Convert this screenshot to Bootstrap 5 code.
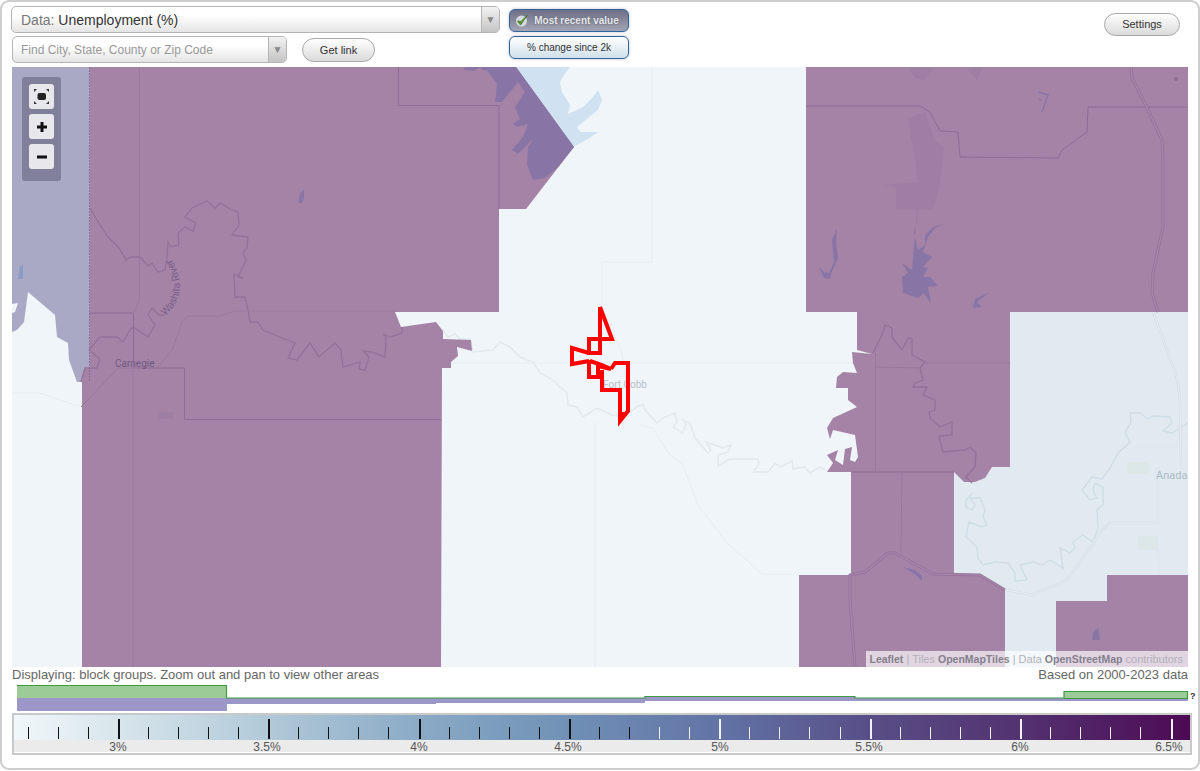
<!DOCTYPE html>
<html lang="en">
<head>
<meta charset="utf-8">
<title>Unemployment map</title>
<link rel="stylesheet" href="https://cdn.jsdelivr.net/npm/bootstrap@5.3.0/dist/css/bootstrap.min.css">
<style>
html,body{margin:0;height:771px;overflow:hidden;background:#fff}
body{font-family:"Liberation Sans",Arial,sans-serif;color:#555}
.app-frame{width:1200px;height:770px;border:2px solid #cdcdcd;border-radius:9px;background:#fff}
.top-area{height:65px}
.pick-col{margin:4px 0 0 9px;width:489px}
.fake-select{height:27px;border:1px solid #b4b4b4;border-radius:5px;background:linear-gradient(#fff 35%,#e4e4e4);overflow:hidden}
.select-main{width:489px;font-size:14px;padding-left:9px;color:#777}
.select-main b{font-weight:400;color:#333}
.select-label{padding-top:1px}
.select-find{width:275px;font-size:12px;padding-left:8px;color:#999;margin-left:1px}
.find-row{margin-top:3px}
.select-arrow{width:18px;height:100%;border-left:1px solid #b4b4b4;background:linear-gradient(#f2f2f2,#c4c4c4);color:#888;font-size:10px}
.pill-btn{font-size:11px;line-height:1;color:#333;padding:0;border:1px solid #a9a9a9;background:linear-gradient(#fff,#dadada);box-shadow:none}
.get-btn{width:73px;height:24px;margin:2px 0 0 15px}
.set-btn{width:76px;height:23px;margin:11px 18px 0 0}
.toggle-col{width:120px;margin:7px 0 0 9px}
.toggle-btn{height:23px;width:120px;padding:0;border:1px solid #2f649f;border-radius:6px;font-size:10px;line-height:1;box-shadow:0 0 3px #bbb}
.toggle-on{background:linear-gradient(#6c6f87,#a3a5b5);color:#e4e8ef;font-weight:700;text-shadow:0 0 2px #555;padding-right:4px}
.toggle-off{background:linear-gradient(#fff,#cfe0ea);color:#333;margin-top:4px}
.map-box{width:1176px;height:600px;margin-left:10px;overflow:hidden;background:#f0f5f9}
.map-box svg{display:block}
.map-tools{left:10px;top:10px;width:39px;height:104px;padding:7px;background:#81809a;border-radius:3px;gap:5px}
.map-tool{width:25px;height:25px;background:#e8e7ec;border-radius:3px}
.map-credit{right:0;bottom:0;height:16px;padding:0 5px 0 4px;font-size:11px;line-height:16px;background:rgba(255,255,255,.66);color:#b4b0ba;white-space:nowrap}
.map-credit b{color:#85808c;font-weight:700;font-size:10.5px}
.info-line{width:1176px;height:18px;margin-left:10px;font-size:13px;line-height:15px;color:#666}
.hist-box{display:block;margin-left:15px}
.scale-box{width:1180px;height:42px;margin-left:10px;border:2px solid #c9c9c9;background:#fff}
.scale-box svg{display:block}
</style>
</head>
<body>
<div class="app-frame">
  <div class="top-area d-flex align-items-start">
    <div class="pick-col">
      <div class="fake-select select-main d-flex align-items-center justify-content-between">
        <span class="select-label">Data: <b>Unemployment (%)</b></span>
        <span class="select-arrow d-flex align-items-center justify-content-center">▼</span>
      </div>
      <div class="find-row d-flex align-items-start">
        <div class="fake-select select-find d-flex align-items-center justify-content-between flex-shrink-0">
          <span>Find City, State, County or Zip Code</span>
          <span class="select-arrow d-flex align-items-center justify-content-center">▼</span>
        </div>
        <button type="button" class="btn rounded-pill pill-btn get-btn">Get link</button>
      </div>
    </div>
    <div class="toggle-col d-flex flex-column">
      <button type="button" class="btn toggle-btn toggle-on d-flex align-items-center justify-content-center gap-1">
        <svg width="15" height="15" viewBox="0 0 15 15"><circle cx="6.500" cy="8" r="5.500" fill="#d5d8dc"/><path d="M2.500 8l3 4 7-10-6.500 6.500z" fill="#58942f" stroke="#3e7a1e" stroke-width=".8"/></svg>
        <span>Most recent value</span>
      </button>
      <button type="button" class="btn toggle-btn toggle-off">% change since 2k</button>
    </div>
    <button type="button" class="btn rounded-pill pill-btn set-btn ms-auto">Settings</button>
  </div>

  <div class="map-box position-relative">
    <svg width="1176" height="600" viewBox="12 67 1176 600" xmlns="http://www.w3.org/2000/svg">
      <defs><path id="riverCurve" d="M165 316Q191 293 172 260"/></defs>
      <!-- light lake -->
      <path d="M515 67H570L565 74L560 82L562 92L570 105L568 114L583 107L593 97L598 90L602 100L598 110L577 127L580 132L598 132L588 139L573 147Z" fill="#d0e2f2"/>
      <!-- faint roads on pale ground -->
      <g fill="none" stroke="#e6edf2" stroke-width="1">
        <path d="M652 67V262H602V307L622 353L630 410"/>
        <path d="M443 363H1033"/>
        <path d="M12 393H40L75 405H82"/>
        <path d="M595 422V667"/>
        <path d="M640 425L653 428L668 453L683 465L698 505L727 543L762 574H799"/>
      </g>
      <!-- river on pale ground -->
      <path d="M443 330L448 337L455 334L460 339L470 339L473 352L493 350L500 342L510 347L520 357L533 362L540 373L553 380L560 387L567 393L568 405L577 407L583 417L597 408L612 415L623 417L637 407L643 404L645 410L657 423L663 418L675 413L677 422L673 427L682 433L686 425L683 420L690 423L695 438L708 453L711 450L706 442L723 448L731 445L728 452L718 455L718 466L730 459H758L759 463L754 472H768L775 463L780 467L792 461L793 469L805 467L810 473L820 467L825 470" fill="none" stroke="#e1e9ed" stroke-width="1.500"/>
      <!-- pale right area -->
      <path d="M1010 312H1188V575H1107V601H1056V667H1005V590L980 575L954 574V472L964 482L975 482L985 478L992 467H1010Z" fill="#e1eaf1"/>
      <g fill="#dce7e8"><path d="M1127 462h22v12h-22z"/><path d="M1138 536h20v14h-20z"/></g>
      <path d="M1133 447H1188M1150 490V493H1172M1158 540L1161 630" fill="none" stroke="#dfe8ea" stroke-width="1"/>
      <path d="M973 493L966 500L966 507L972 510L975 505L970 498L980 498L985 510L983 517L987 525L982 527L969 522L966 537L977 547L978 558L983 565L995 562L1008 563L1015 573L1015 581L1027 580L1020 565L1033 562L1042 565L1050 560L1063 568L1060 548L1070 553L1075 548L1073 542L1083 535L1093 542L1098 528L1097 510L1103 505L1103 487L1095 483L1093 490L1097 498L1090 500L1082 490L1092 477L1102 479L1110 468L1118 453L1130 442L1125 433L1131 422L1130 413L1140 413L1148 419L1153 416L1170 417L1172 423L1163 431L1172 433L1188 423" fill="none" stroke="#cfdde6" stroke-width="1.400"/>
      <path d="M1158 467V523H1110L1102 530L1083 558L1067 580L1032 595L1007 590" fill="none" stroke="#d4e0e6" stroke-width="2.600"/>
      <path d="M1158 467V523H1110L1102 530L1083 558L1067 580L1032 595L1007 590" fill="none" stroke="#e8eff3" stroke-width="1"/>
      <path d="M1153 312L1177 378L1180 400L1181 467" fill="none" stroke="#d4e0e6" stroke-width="2.600"/>
      <path d="M1153 312L1177 378L1180 400L1181 467" fill="none" stroke="#e8eff3" stroke-width="1"/>
      <!-- lavender area -->
      <path d="M12 67H90V367L83 370L82 382L77 382L69 360L68 343L57 337L55 315L28 292L24 322L17 330L12 332V313L15 312L18 303L12 304Z" fill="#a9a9c5"/>
      <path d="M20 266L23 265V279H18Z" fill="#8a9bc4"/>
      <!-- purple blocks -->
      <g fill="#a583a7">
        <path d="M90 67H516L574 147L526 209H499V312H395L401 327L436 322L443 331V339L471 340L472 351L457 347L458 356L451 362V368H442L441 667H82V382L83 370L90 367Z"/>
        <path d="M806 67H1188V312H1010V467H992L985 478L975 482L964 482L954 472V574L980 575L1005 590V667H799V575H851V472H827L833 463L827 455L838 450L835 460L843 465L845 449L852 447L850 460L855 462L858 457L855 435L833 430L830 439L827 428L833 418L857 407L848 400V388H836L837 377L843 372L857 373L853 363L852 352L872 354L857 350V312H806Z"/>
        <path d="M1056 667V601H1107V575H1188V667Z"/>
      </g>
      <!-- faint shapes on purple -->
      <g fill="#9e7ea3">
        <path d="M908 118L925 112L935 140L944 148L940 185L933 210H896V187L883 185L918 182L915 160Z"/>
        <path d="M908 68H934L925 80L915 78Z"/>
        <path d="M967 68H982L977 80Z"/>
        <rect x="158" y="412" width="15" height="7"/>
      </g>
      <!-- lakes -->
      <g fill="#8875a5">
        <path d="M463 70L465 67H516L574 147L558 167L545 178L533 180L527 165L528 147L533 139L527 145L518 154L512 150L523 137L528 124L517 127L513 124L520 119L515 107L525 92L518 82L502 102H495L497 84L487 70L483 70L480 67L474 71Z"/>
        <path d="M918 203L917 220L914 233L918 250L925 245L925 235L933 227L945 224L935 228L928 237L923 252L932 257L923 267L928 268L923 277L930 277L938 286L928 287L931 304L924 293L918 298L903 293L902 277L908 273L902 263L912 270L913 257Z"/>
        <path d="M298 203L300 193L304 190L304 198L302 203Z"/>
        <path d="M1092 640L1093 632L1098 628L1100 640Z"/>
        <path d="M824 278L819 267L824 272L829 273L834 262L832 240L837 228L836 241L838 258L831 274L830 279Z"/>
        <path d="M973 308L975 299L990 292L977 302L982 307Z"/>
        <path d="M903 567L915 570L922 576L922 581L918 577L913 573Z"/>
      </g>
      <path d="M1038 92L1048 95L1042 112M1042 101L1039 99" fill="none" stroke="#8875a5" stroke-width="1.400"/>
      <circle cx="1176" cy="79" r="2" fill="#8c6b94"/>
      <!-- rivers on purple -->
      <g fill="none" stroke="#937199" stroke-width="1.300">
        <path d="M90 208L97 220L108 237L119 248L126 260L130 257L140 257L148 266L152 263L158 272L165 270L167 258L168 242L171 247L179 245L178 233L185 227L193 231L196 223L185 217L192 208L207 201L215 208L220 203L230 209L238 212L239 225L232 235L248 237L247 248L243 253L246 260L238 277L243 278L234 274L235 297L245 297L247 305L250 322L258 322L263 330L282 338L295 343L288 358L297 360L310 343L319 357L335 343L341 350L343 367L360 362L359 369L365 370L369 357L363 351L372 352L385 357L386 337L383 334L390 337L402 333L402 327"/>
        <path d="M89 350L100 337H117L123 342L130 330L133 327L148 337L155 325L148 315L152 308L159 315L165 315"/>
        <path d="M89 350L100 359L97 368H85L81 382"/>
        <path d="M873 353L882 335L885 325L892 328L892 337L902 350L908 338L912 339L912 355L925 362L920 368L923 380L915 383L913 387L927 387L923 395L935 400L935 410L929 412L930 418L940 427L952 422L952 435L939 436L943 452L965 450L970 447L976 453L975 467L966 477L972 483"/>
      </g>
      <!-- boundaries -->
      <g fill="none" stroke="#8f6b96" stroke-width="1">
        <path d="M89.500 67V382" stroke-dasharray="2 1"/>
        <path d="M89 313H133.500V368H184.500V419.500H441"/>
        <path d="M398.500 67V105.500H499V209"/>
        <path d="M806 106H920L930 112L940 131L958 132L960 157L1058 158L1062 150L1087 132L1088 107H1188"/>
        <path d="M851 472H954"/>
      </g>
      <g fill="none" stroke="#9a789e" stroke-width="1">
        <path d="M139.500 67V300L134 312M133 368V667"/>
        <path d="M81 407L118 368H157L172 350L183 320L188 316H220L235 311H395"/>
        <path d="M875.500 353V472M876 367L920 368M925 363H1010M902 472L901 553"/>
      </g>
      <!-- highways on purple -->
      <g fill="none" stroke-linejoin="round">
        <path d="M1131 67L1132 78L1147 108L1162 140L1163 160V227L1153 273L1152 293L1158 312" stroke="#95739b" stroke-width="3"/>
        <path d="M1131 67L1132 78L1147 108L1162 140L1163 160V227L1153 273L1152 293L1158 312" stroke="#a988ab" stroke-width="1.200"/>
        <path d="M1005 590L980 575L933 574L895 553H888L865 572L850 575V600L853 640L855 667" stroke="#95739b" stroke-width="3"/>
        <path d="M1005 590L980 575L933 574L895 553H888L865 572L850 575V600L853 640L855 667" stroke="#a988ab" stroke-width="1.200"/>
      </g>
      <!-- labels -->
      <g font-family="Roboto,sans-serif">
        <text x="115" y="367" font-size="10" fill="#6d5a80">Carnegie</text>
        <text font-size="10.500" fill="#7b5f8a"><textPath href="#riverCurve">Washita River</textPath></text>
        <text x="603" y="388" font-size="10" fill="#b8c0ca">Fort Cobb</text>
        <text x="1156" y="479" font-size="11" fill="#aebac6">Anada</text>
      </g>
      <!-- selected place -->
      <g fill="none" stroke="#f00" stroke-width="4" stroke-linejoin="miter">
        <path d="M600 307L612 339H589V353H600V307"/>
        <path d="M589 353L572 348V364L589 361"/>
        <path d="M589 360V377H598V366L611 369L602 365L590 361"/>
        <path d="M611 369L615 363H628V411L620 421V390H602V370"/>
      </g>
      <path d="M619 412H629L619 423Z" fill="#f00"/>
    </svg>
    <div class="map-tools position-absolute d-flex flex-column">
      <div class="map-tool d-flex align-items-center justify-content-center">
        <svg width="17" height="17" viewBox="0 0 17 17"><rect x="4.500" y="5" width="8.500" height="7" rx="2" fill="#222"/><path d="M1 1h3L1 4zM16 1h-3l3 3zM16 16h-3l3-3zM1 16h3L1 13z" fill="#333"/></svg>
      </div>
      <div class="map-tool d-flex align-items-center justify-content-center">
        <svg width="10" height="10" viewBox="0 0 10 10"><path d="M3.500 0h3v3.500h3.500v3h-3.500v3.500h-3v-3.500h-3.500v-3h3.500z" fill="#111"/></svg>
      </div>
      <div class="map-tool d-flex align-items-center justify-content-center">
        <svg width="10" height="4" viewBox="0 0 10 4"><rect width="10" height="3" y="0.500" fill="#111"/></svg>
      </div>
    </div>
    <div class="map-credit position-absolute"><b>Leaflet</b> | Tiles <b>OpenMapTiles</b> | Data <b>OpenStreetMap</b> contributors</div>
  </div>

  <div class="info-line d-flex justify-content-between">
    <span>Displaying: block groups. Zoom out and pan to view other areas</span>
    <span>Based on 2000-2023 data</span>
  </div>

  <svg class="hist-box" width="1180" height="28" viewBox="17 685 1180 28" xmlns="http://www.w3.org/2000/svg">
    <g fill="#9b98c9">
      <rect x="17" y="698" width="210" height="13"/>
      <rect x="227" y="698" width="209" height="6"/>
      <rect x="436" y="698" width="209" height="5"/>
      <rect x="645" y="697" width="210" height="4"/>
      <rect x="855" y="698" width="209" height="3"/>
      <rect x="1064" y="699" width="124" height="2"/>
    </g>
    <g fill="#9ccb98">
      <rect x="17" y="685" width="210" height="13"/>
      <rect x="1064" y="691" width="124" height="8"/>
    </g>
    <path d="M17 685.500H226.500V698H645V696.500H855V698H1064V691.500H1187.500V699M1064 698.500H1188" fill="none" stroke="#3f9a44" stroke-width="1.200"/>
    <text x="1190" y="699" font-size="9" font-weight="700" fill="#333" font-family="'Liberation Sans',sans-serif">?</text>
  </svg>

  <div class="scale-box">
    <svg width="1176" height="38" viewBox="14 715 1176 38" xmlns="http://www.w3.org/2000/svg" font-family="'Liberation Sans',sans-serif">
      <defs>
        <linearGradient id="scaleGrad" x1="0" x2="1" y1="0" y2="0">
          <stop offset="0" stop-color="#f1f7fa"/>
          <stop offset=".0893" stop-color="#d7e5ec"/>
          <stop offset=".2168" stop-color="#b1c9d8"/>
          <stop offset=".345" stop-color="#8aaac6"/>
          <stop offset=".473" stop-color="#7090b6"/>
          <stop offset=".6" stop-color="#6273a5"/>
          <stop offset=".729" stop-color="#584e87"/>
          <stop offset=".856" stop-color="#533270"/>
          <stop offset="1" stop-color="#4d0a54"/>
        </linearGradient>
      </defs>
      <rect x="14" y="715" width="1176" height="25" fill="url(#scaleGrad)"/>
      <rect x="14" y="740" width="1176" height="12" fill="#ebebeb"/>
      <path d="M28.500 727V739M58.500 727V739M88.500 727V739M148.500 727V739M178.500 727V739M208.500 727V739M238.500 727V739M298.500 727V739M328.500 727V739M358.500 727V739M388.500 727V739M449.500 727V739M479.500 727V739M509.500 727V739M539.500 727V739M599.500 727V739M629.500 727V739" stroke="#111" stroke-width="1"/>
      <path d="M119 719V739M269 719V739M420 719V739M570 719V739" stroke="#111" stroke-width="2"/>
      <path d="M659.500 727V739M689.500 727V739M749.500 727V739M779.500 727V739M809.500 727V739M840.500 727V739M900.500 727V739M930.500 727V739M960.500 727V739M990.500 727V739M1050.500 727V739M1080.500 727V739M1110.500 727V739M1140.500 727V739" stroke="#f2f2f2" stroke-width="1"/>
      <path d="M720 719V739M871 719V739M1021 719V739M1172 719V739" stroke="#f2f2f2" stroke-width="2"/>
      <g font-size="12" fill="#555" text-anchor="middle">
        <text x="118" y="751">3%</text><text x="267" y="751">3.5%</text><text x="419" y="751">4%</text><text x="568" y="751">4.5%</text><text x="720" y="751">5%</text><text x="869" y="751">5.5%</text><text x="1020" y="751">6%</text><text x="1169" y="751">6.5%</text>
      </g>
    </svg>
  </div>
</div>
<script src="https://cdn.jsdelivr.net/npm/bootstrap@5.3.0/dist/js/bootstrap.bundle.min.js"></script>
</body>
</html>
